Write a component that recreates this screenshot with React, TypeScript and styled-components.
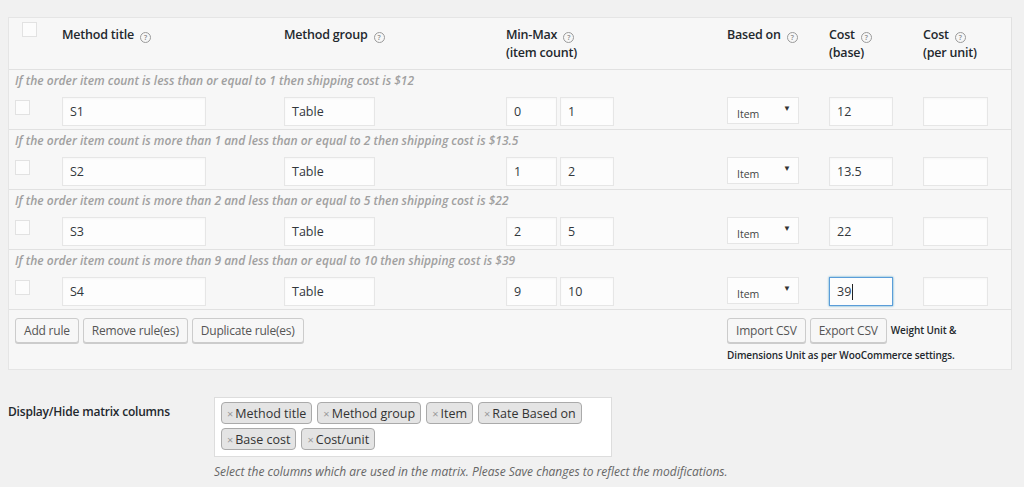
import React from "react";
import styled, { createGlobalStyle } from "styled-components";

const GlobalStyle = createGlobalStyle`
  html, body {
    margin: 0;
    padding: 0;
    background: #f1f1f1;
    font-family: "Open Sans", "Noto Sans", sans-serif;
    color: #23282d;
  }
`;

interface Rule {
  desc: string;
  title: string;
  group: string;
  min: string;
  max: string;
  cost: string;
  focused?: boolean;
}

const rules: Rule[] = [
  { desc: "If the order item count is less than or equal to 1 then shipping cost is $12", title: "S1", group: "Table", min: "0", max: "1", cost: "12" },
  { desc: "If the order item count is more than 1 and less than or equal to 2 then shipping cost is $13.5", title: "S2", group: "Table", min: "1", max: "2", cost: "13.5" },
  { desc: "If the order item count is more than 2 and less than or equal to 5 then shipping cost is $22", title: "S3", group: "Table", min: "2", max: "5", cost: "22" },
  { desc: "If the order item count is more than 9 and less than or equal to 10 then shipping cost is $39", title: "S4", group: "Table", min: "9", max: "10", cost: "39", focused: true },
];

const tags = ["Method title", "Method group", "Item", "Rate Based on", "Base cost", "Cost/unit"];

const COLS = "53px 222px 222px 221px 102px 94px 1fr";

const Help = () => <HelpIcon>?</HelpIcon>;

const App = () => {
  return (
    <Page>
      <GlobalStyle />
      <MatrixBox>
        <HeaderRow>
          <Checkbox $header />
          <HeadCell>Method title <Help /></HeadCell>
          <HeadCell>Method group <Help /></HeadCell>
          <HeadCell>Min-Max <Help /><br />(item count)</HeadCell>
          <HeadCell>Based on <Help /></HeadCell>
          <HeadCell>Cost <Help /><br />(base)</HeadCell>
          <HeadCell>Cost <Help /><br />(per unit)</HeadCell>
        </HeaderRow>

        {rules.map((r) => (
          <RuleRow key={r.title}>
            <RuleDesc>{r.desc}</RuleDesc>
            <FieldGrid>
              <Checkbox />
              <Field $w={144}>{r.title}</Field>
              <Field $w={91}>{r.group}</Field>
              <MinMax>
                <Field $w={51}>{r.min}</Field>
                <Field $w={54}>{r.max}</Field>
              </MinMax>
              <SelectBox>
                <span>Item</span>
                <Caret>▼</Caret>
              </SelectBox>
              <Field $w={64} $focused={r.focused}>
                {r.cost}
                {r.focused && <TextCursor />}
              </Field>
              <Field $w={65} />
            </FieldGrid>
          </RuleRow>
        ))}

        <Footer>
          <ButtonGroup>
            <Button>Add rule</Button>
            <Button>Remove rule(es)</Button>
            <Button>Duplicate rule(es)</Button>
          </ButtonGroup>
          <CsvGroup>
            <CsvLine>
              <Button>Import CSV</Button>
              <Button>Export CSV</Button>
              <UnitNote>Weight Unit &amp;</UnitNote>
            </CsvLine>
            <UnitNote>Dimensions Unit as per WooCommerce settings.</UnitNote>
          </CsvGroup>
        </Footer>
      </MatrixBox>

      <SettingRow>
        <SettingLabel>Display/Hide matrix columns</SettingLabel>
        <SettingControl>
          <TagBox>
            {tags.map((t) => (
              <Tag key={t}>
                <TagRemove>×</TagRemove>
                {t}
              </Tag>
            ))}
          </TagBox>
          <HelpText>
            Select the columns which are used in the matrix. Please Save changes to reflect the modifications.
          </HelpText>
        </SettingControl>
      </SettingRow>
    </Page>
  );
};

const Page = styled.div`
  padding: 17px 12px 0 8px;
`;

const MatrixBox = styled.div`
  background: #f7f7f7;
  border: 1px solid #e5e5e5;
  border-right: 1px solid #e1e1e1;
`;

const HeaderRow = styled.div`
  display: grid;
  grid-template-columns: ${COLS};
  align-items: start;
  height: 51px;
  border-bottom: 1px solid #e1e1e1;
`;

const HeadCell = styled.div`
  padding-top: 8px;
  font-size: 12.5px;
  font-weight: 600;
  line-height: 18px;
  color: #23282d;
  letter-spacing: -0.2px;
`;

const HelpIcon = styled.span`
  display: inline-block;
  width: 9px;
  height: 9px;
  border: 1px solid #9a9a9a;
  border-radius: 50%;
  font-size: 7px;
  line-height: 9px;
  text-align: center;
  color: #8a8a8a;
  font-weight: 600;
  vertical-align: -1px;
  margin-left: 3px;
`;

const Checkbox = styled.span<{ $header?: boolean }>`
  display: block;
  width: 13px;
  height: 13px;
  background: #fcfcfc;
  border: 1px solid #e2e2e2;
  margin: ${(p) => (p.$header ? "4px 0 0 13px" : "3px 0 0 6px")};
`;

const RuleRow = styled.div`
  border-bottom: 1px solid #e1e1e1;
  padding: 3px 0 3px;
`;

const RuleDesc = styled.div`
  padding-left: 6px;
  font-size: 12px;
  font-style: italic;
  font-weight: 600;
  line-height: 16px;
  color: #a0a0a0;
`;

const FieldGrid = styled.div`
  display: grid;
  grid-template-columns: ${COLS};
  align-items: start;
  margin-top: 8px;
`;

const Field = styled.div<{ $w: number; $focused?: boolean }>`
  box-sizing: border-box;
  width: ${(p) => p.$w}px;
  height: 29px;
  padding: 0 7px;
  display: flex;
  align-items: center;
  background: #fdfdfd;
  border: 1px solid ${(p) => (p.$focused ? "#5b9dd9" : "#e6e6e6")};
  box-shadow: ${(p) =>
    p.$focused ? "0 0 2px rgba(30, 140, 190, 0.8)" : "inset 0 1px 2px rgba(0, 0, 0, 0.03)"};
  font-size: 12.5px;
  color: #32373c;
`;

const TextCursor = styled.span`
  display: inline-block;
  width: 1px;
  height: 16px;
  background: #222;
  margin-left: 1px;
`;

const MinMax = styled.div`
  display: flex;
  gap: 3px;
`;

const SelectBox = styled.div`
  box-sizing: border-box;
  width: 72px;
  height: 27px;
  position: relative;
  background: #fdfdfd;
  border: 1px solid #e6e6e6;
  padding: 9px 0 0 9px;
  font-size: 10.5px;
  color: #444;
`;

const Caret = styled.span`
  position: absolute;
  right: 7px;
  top: 4px;
  font-size: 8px;
  color: #333;
`;

const Footer = styled.div`
  display: flex;
  justify-content: space-between;
  height: 59px;
  padding: 8px 0 0 6px;
  box-sizing: border-box;
`;

const ButtonGroup = styled.div`
  display: flex;
  gap: 4px;
  align-items: flex-start;
`;

const CsvGroup = styled.div`
  width: 284px;
  display: flex;
  flex-direction: column;
`;

const CsvLine = styled.div`
  display: flex;
  gap: 4px;
  align-items: flex-start;
`;

const Button = styled.button`
  box-sizing: border-box;
  height: 25px;
  padding: 0 8px;
  background: #f7f7f7;
  border: 1px solid #cccccc;
  border-radius: 3px;
  box-shadow: 0 1px 0 #cccccc;
  font-family: "Open Sans", "Noto Sans", sans-serif;
  font-size: 12px;
  letter-spacing: -0.2px;
  color: #555;
  white-space: nowrap;
  cursor: pointer;
`;

const UnitNote = styled.span`
  font-size: 10px;
  font-weight: 600;
  color: #23282d;
  line-height: 18px;
  margin-top: 0px;
  letter-spacing: -0.1px;
  &:last-child {
    margin-top: 3px;
  }
`;

const SettingRow = styled.div`
  display: flex;
  margin-top: 27px;
`;

const SettingLabel = styled.div`
  width: 206px;
  padding-top: 6px;
  font-size: 12px;
  font-weight: 600;
  color: #23282d;
  letter-spacing: -0.2px;
`;

const SettingControl = styled.div`
  display: flex;
  flex-direction: column;
`;

const TagBox = styled.div`
  box-sizing: border-box;
  width: 398px;
  height: 60px;
  background: #fff;
  border: 1px solid #ddd;
  padding: 4px 4px 0 6px;
  display: flex;
  flex-wrap: wrap;
  align-content: flex-start;
  gap: 4px 5px;
`;

const Tag = styled.span`
  box-sizing: border-box;
  height: 22px;
  padding: 0 5px 0 5px;
  display: inline-flex;
  align-items: center;
  background: #e4e4e4;
  border: 1px solid #aaa;
  border-radius: 4px;
  font-size: 12.5px;
  color: #333;
`;

const TagRemove = styled.span`
  color: #999;
  font-size: 11px;
  margin-right: 2px;
`;

const HelpText = styled.p`
  margin: 6px 0 0;
  font-size: 12px;
  font-style: italic;
  color: #666;
`;

export default App;
